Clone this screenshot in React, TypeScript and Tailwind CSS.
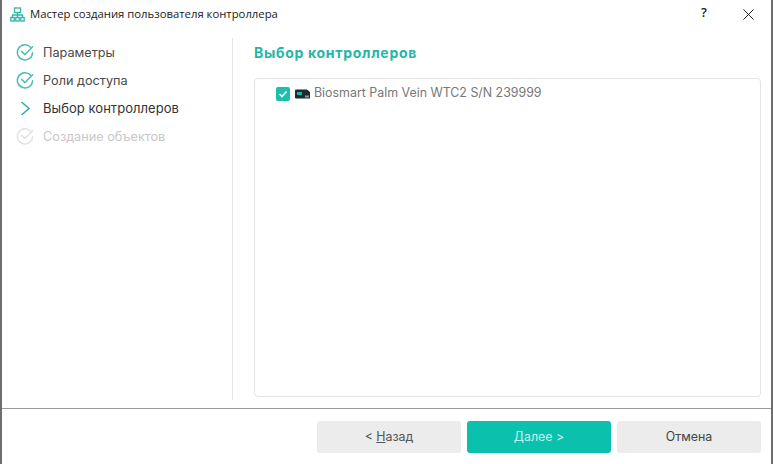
const CheckCircle = ({ muted }: { muted?: boolean }) => (
    <svg width="18" height="18" viewBox="0 0 18 18" fill="none" stroke={muted ? "#e2e2e2" : "#4dbdb1"} strokeWidth="1.5" strokeLinecap="round" strokeLinejoin="round" className="flex-shrink-0">
        <path d="M14.6 4.2A7.6 7.6 0 1 0 16.6 9.8" />
        <path d="M5.6 8.4 9 11.6 16.6 3.8" />
    </svg>
);

const steps = [
    { label: "Параметры", state: "done" },
    { label: "Роли доступа", state: "done" },
    { label: "Выбор контроллеров", state: "active" },
    { label: "Создание объектов", state: "todo" },
];

const App = () => {
    return (
        <div className="w-[773px] h-[464px] flex flex-col bg-white border-l-2 border-r-2 border-l-[#6e6e6e] border-r-[#6e6e6e] overflow-hidden font-['Inter','Noto_Sans',sans-serif]">
            {/* Title bar */}
            <div className="h-[28px] flex items-center pl-[8px] flex-shrink-0">
                <svg width="15" height="15" viewBox="0 0 15 15" fill="none" stroke="#2fb5a8" strokeWidth="1.3" className="flex-shrink-0">
                    <rect x="4.500" y="1" width="6" height="4.500" />
                    <path d="M7.500 5.500V8M2.500 10.500V8H12.500V10.500M7.500 8V10.500" />
                    <rect x="0.800" y="10.500" width="3.400" height="3.500" />
                    <rect x="5.800" y="10.500" width="3.400" height="3.500" />
                    <rect x="10.800" y="10.500" width="3.400" height="3.500" />
                </svg>
                <span className="ml-[5px] text-[11.3px] text-[#1a1a1a] font-['Open_Sans',sans-serif]">Мастер создания пользователя контроллера</span>
                <span className="ml-auto w-[42px] pb-[2px] text-center text-[13px] font-semibold text-[#222] font-['Open_Sans',sans-serif]">?</span>
                <div className="w-[46px] flex justify-center">
                    <svg width="11" height="11" viewBox="0 0 11 11" stroke="#222" strokeWidth="1">
                        <path d="M0.500 0.500 10.500 10.500M10.500 0.500 0.500 10.500" />
                    </svg>
                </div>
            </div>

            {/* Body */}
            <div className="flex h-[362px] mt-[10px] flex-shrink-0">
                <div className="w-[231px] flex-shrink-0 border-r border-[#e4e4e4] pl-[14px] flex flex-col gap-[10px] pt-[5px]">
                    {steps.map((step) => (
                        <div key={step.label} className="h-[18px] flex items-center">
                            <div className="w-[27px] flex-shrink-0">
                                {step.state === "active" ? (
                                    <svg width="18" height="18" viewBox="0 0 18 18" fill="none" stroke="#2bb3a6" strokeWidth="1.6">
                                        <path d="M5.500 3 13 9.500 5.500 16" />
                                    </svg>
                                ) : (
                                    <CheckCircle muted={step.state === "todo"} />
                                )}
                            </div>
                            <span className={`pt-[2px] ${step.state === "todo" ? "text-[12.7px] text-[#c8c8c8]" : step.state === "active" ? "text-[13px] tracking-[0.05px] text-[#333]" : "text-[12.7px] text-[#4a4a4a]"}`}>
                                {step.label}
                            </span>
                        </div>
                    ))}
                </div>
                <div className="flex-1 pl-[21px] pr-[10px] flex flex-col min-w-0">
                    <h1 className="text-[14px] leading-[18px] mt-[6px] font-bold text-[#27b5a7] tracking-[0.7px]">Выбор контроллеров</h1>
                    <div className="mt-[16px] h-[319px] border border-[#e4e4e4] rounded-[4px] pl-[21px] pt-[7px]">
                        <div className="flex items-center h-[15px]">
                            <div className="w-[14px] h-[14px] rounded-[2px] bg-[#1cbfad] flex items-center justify-center flex-shrink-0">
                                <svg width="10" height="10" viewBox="0 0 10 10" fill="none" stroke="#fff" strokeWidth="1.6">
                                    <path d="M1.500 5 4 7.500 8.500 2.500" />
                                </svg>
                            </div>
                            <svg width="15" height="10" viewBox="0 0 15 10" className="ml-[5px] flex-shrink-0">
                                <path d="M1 0.500H12L15 3V9.500H1Q0 9.500 0 8.500V1.500Q0 0.500 1 0.500Z" fill="#1d2a2e" />
                                <rect x="2" y="3" width="5" height="3" fill="#17b5a3" />
                                <rect x="10" y="6.500" width="4" height="2" fill="#8a9a9c" />
                            </svg>
                            <span className="ml-[4px] text-[12.4px] text-[#777] whitespace-nowrap">Biosmart Palm Vein WTC2 S/N 239999</span>
                        </div>
                    </div>
                </div>
            </div>

            {/* Footer */}
            <div className="mt-[8px] border-t border-[#9a9a9a] flex-1 flex justify-end gap-[6px] pr-[10px] pt-[12px]">
                <button className="w-[144px] h-[32px] rounded-[3px] bg-[#ececec] text-[12.400px] text-[#555]">
                    &lt; <span className="underline">Н</span>азад
                </button>
                <button className="w-[144px] h-[32px] rounded-[3px] bg-[#0cc0ae] text-[12.400px] text-[#c9f1ec]">
                    <span className="underline">Д</span>алее &gt;
                </button>
                <button className="w-[144px] h-[32px] rounded-[3px] bg-[#ececec] text-[12.400px] text-[#444]">
                    Отмена
                </button>
            </div>
        </div>
    );
};

export default App;
